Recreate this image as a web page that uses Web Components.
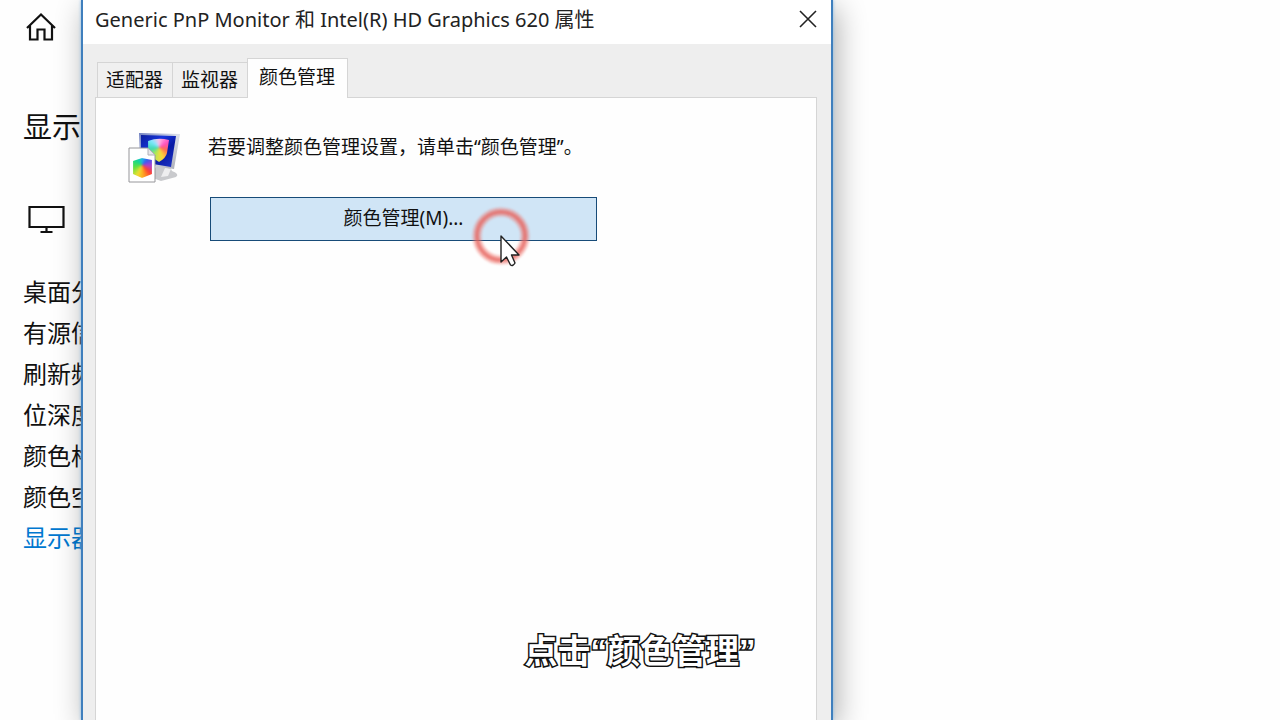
<!DOCTYPE html>
<html lang="zh-CN">
<head>
<meta charset="utf-8">
<meta name="viewport" content="width=device-width, initial-scale=1">
<title>显示适配器属性</title>
<style>
  body {
    margin: 0;
    min-height: 100vh;
    overflow: hidden;
    background: #fefefe;
    color: #111;
    font-family: "Noto Sans", "Noto Sans CJK SC", sans-serif;
  }
</style>
</head>
<body>
<display-desktop>
  <settings-pane slot="settings" heading="显示">
    <settings-row>桌面分</settings-row>
    <settings-row>有源信</settings-row>
    <settings-row>刷新频</settings-row>
    <settings-row>位深度</settings-row>
    <settings-row>颜色格</settings-row>
    <settings-row>颜色空</settings-row>
    <settings-row href="#adapter">显示器</settings-row>
  </settings-pane>
  <property-dialog slot="dialog">
    <span slot="title">Generic PnP Monitor 和 Intel(R) HD Graphics 620 属性</span>
    <dialog-tab slot="tab">适配器</dialog-tab>
    <dialog-tab slot="tab">监视器</dialog-tab>
    <dialog-tab slot="tab" active>颜色管理</dialog-tab>
    <color-panel>
      <span slot="hint">若要调整颜色管理设置，请单击“颜色管理”。</span>
      <span slot="action">颜色管理(M)...</span>
      <click-pointer slot="pointer"></click-pointer>
    </color-panel>
  </property-dialog>
  <video-caption slot="caption">点击“颜色管理”</video-caption>
</display-desktop>

<script>
function attach(el, html) {
    const root = el.attachShadow({ mode: 'open' });
    root.innerHTML = html;
    return root;
}

class DisplayDesktop extends HTMLElement {
    constructor() {
        super()
        attach(this, `
  <style>
  :host {
    display: grid;
    grid-template-columns: 81px minmax(0, 752px);
    min-height: 100vh;
    position: relative;
  }
  </style>
  <slot name="settings"></slot>
  <slot name="dialog"></slot>
  <slot name="caption"></slot>
`);
    }
}
customElements.define('display-desktop', DisplayDesktop)

class SettingsPane extends HTMLElement {
    constructor() {
        super()
        this._root = attach(this, `
  <style>
  :host {
    display: flex;
    flex-direction: column;
    min-width: 0;
    padding: 12px 0 0 23px;
    white-space: nowrap;
  }
  a, svg {
    display: block;
  }
  h1 {
    margin: 63px 0 0;
    font-size: 29px;
    line-height: 44px;
    font-weight: 400;
  }
  .home {
    margin-left: 1px;
  }
  .monitor {
    margin: 56px 0 36px 4px;
  }
  .rows {
    display: flex;
    flex-direction: column;
  }
  </style>
  <a class="home" href="#home" aria-label="主页">
    <svg width="34" height="30" viewBox="0 0 34 30" fill="none" stroke="#111" stroke-width="2.200">
      <path d="M3 16 L17 2.500 L31 16 M6 13.500 V27.500 H13.500 V17.500 H20.500 V27.500 H28 V13.500"/>
    </svg>
  </a>
  <h1></h1>
  <svg class="monitor" width="40" height="30" viewBox="0 0 40 30" fill="none" stroke="#111" stroke-width="2.200">
    <path d="M2.500 2 H36.500 V22 H2.500 Z M19.500 22 V27 M13.500 27 H25.500"/>
  </svg>
  <div class="rows"><slot></slot></div>
`);
    }
    connectedCallback() {
        this._root.querySelector('h1').textContent = this.getAttribute('heading')
    }
}
customElements.define('settings-pane', SettingsPane)

class SettingsRow extends HTMLElement {
    constructor() {
        super()
        this._root = attach(this, `
  <style>
  :host {
    display: block;
    font-size: 24px;
    line-height: 41px;
    height: 41px;
  }
  a {
    color: #0078d0;
    text-decoration: none;
  }
  </style>
  <slot></slot>
`);
    }
    connectedCallback() {
        if (this.hasAttribute('href')) {
            const link = document.createElement('a')
            link.href = this.getAttribute('href')
            link.appendChild(this._root.querySelector('slot'))
            this._root.appendChild(link)
        }
    }
}
customElements.define('settings-row', SettingsRow)

class PropertyDialog extends HTMLElement {
    constructor() {
        super()
        attach(this, `
  <style>
  :host {
    display: flex;
    flex-direction: column;
    box-sizing: border-box;
    z-index: 1;
    background: #eeeeee;
    border: solid #3f7fbd;
    border-width: 0 2px;
    box-shadow: 0 0 3px #8ebfe8, 4px 8px 28px rgba(0, 0, 0, .32);
  }
  header {
    display: flex;
    align-items: center;
    justify-content: space-between;
    height: 44px;
    padding: 0 12px;
    background: #fff;
    font-size: 20px;
    line-height: 28px;
    color: #222;
    white-space: nowrap;
  }
  .title {
    padding-bottom: 5px;
  }
  button {
    display: flex;
    margin: 0;
    padding: 0 0 6px;
    border: 0;
    background: none;
  }
  .tabs {
    display: flex;
    align-items: flex-end;
    padding: 14px 14px 0;
    height: 39px;
  }
  main {
    flex: 1;
    margin: 0 14px 0 12px;
    border: 1px solid #d5d5d5;
    border-bottom: 0;
    background: #fefefe;
  }
  </style>
  <header>
    <div class="title"><slot name="title"></slot></div>
    <button type="button" aria-label="关闭">
      <svg width="22" height="20" viewBox="0 0 22 20" stroke="#222" stroke-width="1.600"><path d="M3 2 L19 18 M19 2 L3 18"/></svg>
    </button>
  </header>
  <div class="tabs" role="tablist"><slot name="tab"></slot></div>
  <main><slot></slot></main>
`);
    }
}
customElements.define('property-dialog', PropertyDialog)

class DialogTab extends HTMLElement {
    constructor() {
        super()
        this._root = attach(this, `
  <style>
  :host {
    display: block;
  }
  :host([active]) {
    z-index: 1;
    margin-bottom: -1px;
  }
  button {
    display: block;
    box-sizing: border-box;
    height: 35px;
    margin: 0;
    padding: 0 9px 0 8px;
    border: 1px solid #d5d5d5;
    border-right: 0;
    border-bottom: 0;
    border-radius: 0;
    background: #f0f0f0;
    color: inherit;
    font: inherit;
    font-size: 19px;
    line-height: 32px;
    white-space: nowrap;
  }
  :host([active]) button {
    height: 40px;
    padding: 0 12px 4px 11px;
    border-right: 1px solid #d5d5d5;
    background: #fefefe;
  }
  </style>
  <button type="button" role="tab"><slot></slot></button>
`);
    }
    connectedCallback() {
        this._root.querySelector('button').setAttribute('aria-selected', this.hasAttribute('active'))
    }
}
customElements.define('dialog-tab', DialogTab)

class ColorPanel extends HTMLElement {
    constructor() {
        super()
        attach(this, `
  <style>
  :host {
    display: grid;
    grid-template-columns: 54px minmax(0, 389px);
    column-gap: 26px;
    padding: 35px 32px;
    font-size: 19px;
    line-height: 28px;
  }
  p {
    margin: 0 0 36px;
    white-space: nowrap;
  }
  .action {
    position: relative;
    padding-left: 2px;
  }
  button {
    display: block;
    box-sizing: border-box;
    width: 100%;
    height: 44px;
    margin: 0;
    padding: 0 0 2px;
    border: 1px solid #174b78;
    border-radius: 0;
    background: #d0e5f6;
    color: inherit;
    font: inherit;
  }
  </style>
  <color-icon></color-icon>
  <div>
    <p><slot name="hint"></slot></p>
    <div class="action">
      <button type="button"><slot name="action"></slot></button>
      <slot name="pointer"></slot>
    </div>
  </div>
`);
    }
}
customElements.define('color-panel', ColorPanel)

// monitor with a colour cube, and a page with a smaller one in front
class ColorIcon extends HTMLElement {
    constructor() {
        super()
        attach(this, `
  <style>
  :host {
    display: block;
  }
  svg {
    display: block;
  }
  .wheel {
    width: 100%;
    height: 100%;
    filter: blur(1px);
  }
  .wheel.big {
    background: conic-gradient(from 0deg at 50% 40%, #ffc0e8, #ff4fc0 60deg, #ff6a50 110deg, #ffd83a 160deg, #b8e850 205deg, #40d8b0 260deg, #80e8ff 310deg, #ffc0e8);
  }
  .wheel.small {
    background: conic-gradient(from 0deg at 48% 36%, #20b8e8, #3858f0 50deg, #b040d0 95deg, #ff4030 135deg, #ffa020 170deg, #f0e030 205deg, #60e040 250deg, #10d890 310deg, #20b8e8);
  }
  </style>
  <svg width="54" height="52" viewBox="0 0 54 52">
    <defs>
      <linearGradient id="screen" x1="0" y1="0" x2="1" y2="1">
        <stop offset="0" stop-color="#0c1f9c"/>
        <stop offset=".35" stop-color="#1735dc"/>
        <stop offset=".6" stop-color="#0819a4"/>
        <stop offset="1" stop-color="#2038c8"/>
      </linearGradient>
      <linearGradient id="frame" x1="0" y1="0" x2="1" y2="1">
        <stop offset="0" stop-color="#6f7fc0"/>
        <stop offset=".5" stop-color="#dce0ea"/>
        <stop offset="1" stop-color="#a6a8b0"/>
      </linearGradient>
      <clipPath id="bigCube"><path d="M20 8 Q30 4 41 7 L39 20 Q38 25 31 29 Q22 24 20 17 Z"/></clipPath>
      <clipPath id="smallCube"><path d="M5 28 L14 25 L24 27 V41 L14 45 L5 41 Z"/></clipPath>
    </defs>
    <path d="M29 32 L42 34 L44 38 Q52 41 48 44 L33 48 L22 44 Z" fill="#c9cacd"/>
    <path d="M37 35 L43 36 L40 43 L33 44 Z" fill="#eeeeef"/>
    <path d="M11 0 L52 1 L46 36 L12 31 Z" fill="url(#frame)"/>
    <path d="M13 2 L48 3 L43 34 L13 29 Z" fill="url(#screen)"/>
    <foreignObject x="19" y="4" width="24" height="26" clip-path="url(#bigCube)"><div xmlns="http://www.w3.org/1999/xhtml" class="wheel big"></div></foreignObject>
    <path d="M1 15 H20 L27 22 V49 H1 Z" fill="#fff" stroke="#96969a"/>
    <path d="M20 15 V22 H27 Z" fill="#e6e6ea" stroke="#b0b0b8"/>
    <foreignObject x="4" y="24" width="21" height="22" clip-path="url(#smallCube)"><div xmlns="http://www.w3.org/1999/xhtml" class="wheel small"></div></foreignObject>
  </svg>
`);
    }
}
customElements.define('color-icon', ColorIcon)

class ClickPointer extends HTMLElement {
    constructor() {
        super()
        attach(this, `
  <style>
  :host {
    position: absolute;
    left: 261px;
    top: 8px;
    pointer-events: none;
  }
  svg {
    display: block;
  }
  .ring {
    filter: blur(1px);
  }
  </style>
  <svg width="64" height="64" viewBox="0 0 64 64" fill="none">
    <g class="ring">
      <circle cx="32" cy="31" r="24" stroke="#f06b62" stroke-opacity=".4" stroke-width="9"/>
      <circle cx="32" cy="31" r="24" stroke="#e6645e" stroke-opacity=".7" stroke-width="4"/>
    </g>
    <path d="M32 31 V57 L37.500 52 L41.500 60 Q44 61.500 46 58 L42.500 50 H50 Z" fill="#fff" stroke="#222" stroke-width="1.400" stroke-linejoin="round"/>
  </svg>
`);
    }
}
customElements.define('click-pointer', ClickPointer)

class VideoCaption extends HTMLElement {
    constructor() {
        super()
        attach(this, `
  <style>
  :host {
    position: absolute;
    left: 0;
    right: 0;
    bottom: 44px;
    z-index: 2;
    text-align: center;
    font-family: "Liberation Sans", "Noto Sans CJK SC", sans-serif;
    font-size: 33px;
    line-height: 48px;
    font-weight: 600;
    color: #fff;
    -webkit-text-stroke: 3px #111;
    paint-order: stroke fill;
  }
  </style>
  <slot></slot>
`);
    }
}
customElements.define('video-caption', VideoCaption)
</script>
</body>
</html>
